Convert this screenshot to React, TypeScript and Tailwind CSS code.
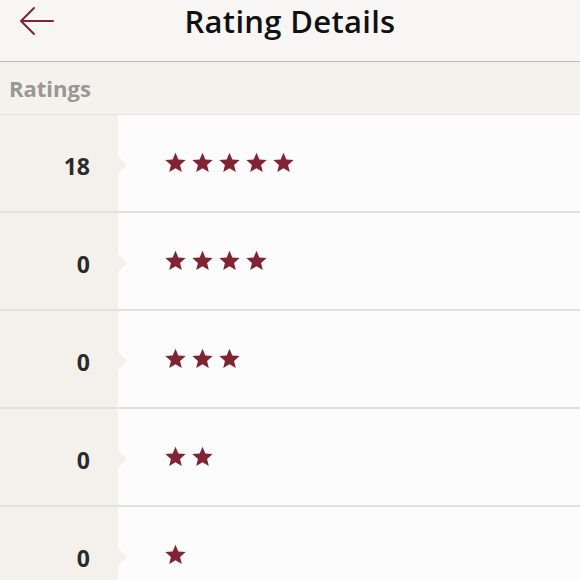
const rows = [
  { count: 18, stars: 5 },
  { count: 0, stars: 4 },
  { count: 0, stars: 3 },
  { count: 0, stars: 2 },
  { count: 0, stars: 1 },
]

function Star() {
  return (
    <svg viewBox="0 0 24 24" className="w-[23px] h-[23px]" fill="#7f2335">
      <path d="M12 1.8l2.95 7.1 7.65.6-5.85 5 1.8 7.5L12 18l-6.55 4 1.8-7.5-5.85-5 7.65-.6z" />
    </svg>
  )
}

function BackArrow() {
  return (
    <svg viewBox="0 0 36 30" className="w-[36px] h-[30px]" fill="none" stroke="#7f2335" strokeWidth={2} strokeLinecap="round" strokeLinejoin="round">
      <path d="M2 15h32M15 2L2 15l13 13" />
    </svg>
  )
}

export default function App() {
  return (
    <div
      className="w-[580px] h-[580px] overflow-hidden bg-[#fcfcfc]"
      style={{ fontFamily: '"Open Sans", sans-serif' }}
    >
      <header className="relative h-[62px] bg-[#f7f6f4] border-b border-[#bdbcba] flex items-center justify-center">
        <button className="absolute left-[19px] top-[6px]">
          <BackArrow />
        </button>
        <h1 className="text-[31px] font-semibold text-[#111] -mt-[18px] tracking-[0.3px]">
          Rating Details
        </h1>
      </header>

      <div className="h-[53px] bg-[#f5f2ee] border-b border-[#e6e3df] flex items-center px-[9px]">
        <span className="text-[22px] font-bold text-[#9a9794]">Ratings</span>
      </div>

      {rows.map((r, i) => (
        <div key={i} className="flex h-[98px] border-b-2 border-[#e3e2e0]">
          <div className="relative w-[118px] bg-[#f4f1ec] flex items-center justify-end pr-[28px]">
            <span className="text-[23px] font-bold text-[#2a2a2a] mt-[6px]">{r.count}</span>
            <div className="absolute right-[-9px] top-1/2 -translate-y-1/2 w-0 h-0 border-y-[9px] border-y-transparent border-l-[9px] border-l-[#f4f1ec] mt-[2px]" />
          </div>
          <div className="flex-1 flex items-center pl-[46px] gap-[4px] -mt-[1px]">
            {Array.from({ length: r.stars }).map((_, j) => (
              <Star key={j} />
            ))}
          </div>
        </div>
      ))}
    </div>
  )
}
